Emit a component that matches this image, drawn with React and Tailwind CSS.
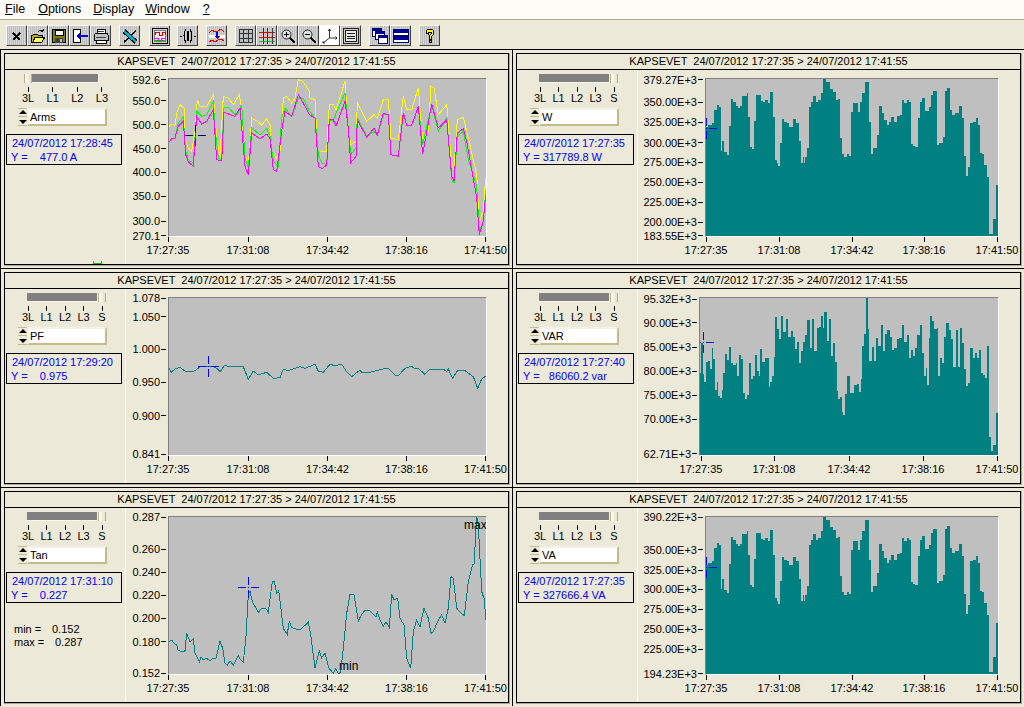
const title = 'KAPSEVET  24/07/2012 17:27:35 > 24/07/2012 17:41:55'
const times = ['17:27:35', '17:31:08', '17:34:42', '17:38:16', '17:41:50']

// chart data is in zoomed-screen units (3x), see toLine / toBars
const yellow = [[507,235],[515,228],[525,232],[530,195],[540,170],[552,180],[557,280],[565,300],[575,310],[585,250],[592,155],[600,175],[620,175],[640,140],[645,200],[650,270],[660,330],[670,145],[685,150],[700,170],[718,140],[725,180],[733,310],[745,355],[755,210],[775,222],[785,232],[800,212],[810,230],[815,310],[830,330],[840,310],[850,150],[860,145],[875,165],[885,150],[895,95],[908,100],[928,130],[930,150],[945,155],[953,310],[980,310],[988,170],[1000,170],[1008,185],[1035,100],[1045,240],[1052,290],[1068,280],[1072,165],[1100,220],[1122,200],[1132,210],[1150,155],[1165,155],[1173,270],[1195,275],[1210,145],[1220,185],[1235,185],[1255,120],[1268,275],[1285,250],[1293,115],[1302,120],[1315,200],[1340,170],[1355,350],[1362,365],[1372,215],[1390,208],[1405,270],[1430,380],[1438,520],[1450,490],[1457,390]]
const green = [[507,282],[515,272],[525,270],[535,225],[550,208],[557,310],[565,335],[580,345],[590,190],[605,205],[620,200],[640,160],[645,240],[655,330],[665,335],[672,180],[685,178],[700,195],[715,195],[725,170],[735,330],[745,360],[755,240],[780,260],[800,242],[810,265],[820,340],[835,355],[845,210],[855,180],[875,205],[895,150],[910,150],[928,190],[945,210],[955,320],[965,345],[980,350],[988,220],[1000,215],[1015,180],[1035,135],[1045,240],[1052,320],[1068,300],[1072,210],[1100,265],[1122,250],[1132,260],[1150,200],[1165,200],[1173,320],[1195,325],[1210,200],[1220,232],[1235,232],[1255,175],[1268,290],[1295,170],[1315,250],[1340,210],[1355,395],[1362,405],[1372,265],[1390,250],[1405,335],[1430,415],[1438,550],[1450,520],[1457,430]]
const magenta = [[507,282],[515,272],[525,270],[535,235],[550,220],[557,320],[565,342],[580,355],[590,205],[605,228],[620,220],[640,185],[650,335],[665,338],[672,192],[690,200],[705,205],[720,180],[735,355],[745,380],[755,255],[780,272],[800,258],[810,272],[820,365],[830,370],[845,250],[855,190],[875,205],[895,140],[910,165],[928,200],[945,210],[955,355],[965,362],[980,352],[988,215],[1000,215],[1008,235],[1035,160],[1045,240],[1052,345],[1068,325],[1072,215],[1100,268],[1122,240],[1132,262],[1150,195],[1165,200],[1173,320],[1195,325],[1210,195],[1220,232],[1235,232],[1255,175],[1268,318],[1295,168],[1315,240],[1340,215],[1355,385],[1362,400],[1372,255],[1390,242],[1400,280],[1430,450],[1438,560],[1450,520],[1457,440]]
const pf = [[507,310],[513,322],[525,312],[540,307],[555,318],[580,320],[600,306],[625,303],[640,305],[650,310],[660,320],[675,300],[685,305],[730,305],[745,343],[760,318],[775,330],[800,322],[820,340],[840,338],[850,312],[865,317],[885,310],[900,305],[915,310],[945,298],[955,318],[970,322],[990,298],[1005,302],[1025,298],[1040,320],[1055,335],[1080,315],[1085,322],[1110,322],[1150,312],[1165,310],[1185,330],[1195,332],[1215,310],[1235,304],[1245,312],[1255,310],[1275,328],[1290,312],[1330,312],[1340,320],[1345,312],[1358,340],[1372,318],[1395,317],[1420,335],[1433,370],[1445,342],[1457,333]]
const tan = [[507,470],[515,465],[525,478],[530,480],[535,497],[550,500],[555,497],[560,445],[570,470],[580,462],[585,505],[598,530],[603,515],[610,525],[620,520],[630,527],[640,520],[648,520],[660,468],[668,490],[675,535],[682,540],[690,528],[700,540],[715,513],[722,525],[730,532],[738,455],[745,330],[750,318],[757,350],[775,382],[785,370],[797,370],[805,382],[817,290],[823,290],[830,325],[836,318],[842,365],[850,430],[862,448],[868,408],[875,428],[900,435],[925,412],[933,455],[945,550],[958,497],[965,518],[975,505],[987,550],[1000,565],[1007,550],[1015,565],[1022,563],[1030,490],[1040,385],[1050,328],[1062,330],[1075,408],[1085,388],[1095,376],[1108,376],[1128,395],[1132,382],[1140,405],[1150,425],[1158,410],[1168,428],[1175,330],[1183,345],[1193,340],[1200,400],[1212,420],[1220,520],[1232,550],[1240,440],[1250,405],[1260,425],[1272,370],[1285,400],[1293,445],[1300,440],[1315,405],[1325,390],[1335,415],[1345,370],[1353,275],[1360,280],[1370,370],[1380,382],[1393,392],[1405,290],[1418,238],[1422,238],[1430,95],[1435,120],[1445,320],[1452,340],[1458,405]]
const watts = [[47,170],[53,165],[65,158],[72,120],[80,105],[87,112],[93,243],[96,213],[102,245],[110,255],[117,168],[123,87],[130,97],[137,108],[143,113],[150,108],[156,78],[170,70],[175,140],[181,232],[186,237],[192,152],[198,75],[212,93],[219,97],[226,90],[233,100],[240,67],[248,140],[255,270],[261,280],[265,288],[270,218],[276,147],[283,155],[290,160],[297,170],[310,148],[317,158],[327,212],[333,280],[338,260],[343,280],[346,260],[351,234],[357,110],[363,97],[370,78],[377,95],[385,90],[393,70],[400,27],[408,37],[420,57],[430,65],[437,90],[443,88],[450,205],[457,253],[463,260],[470,252],[476,258],[483,125],[490,100],[503,125],[510,97],[517,68],[525,35],[537,155],[543,252],[550,235],[558,233],[562,195],[568,108],[575,130],[583,150],[590,165],[597,155],[604,140],[611,155],[620,137],[630,135],[636,90],[642,100],[650,90],[658,97],[662,222],[668,228],[675,232],[684,145],[690,95],[697,85],[705,122],[718,110],[722,75],[730,62],[742,225],[746,220],[758,200],[765,62],[772,55],[780,120],[787,135],[794,130],[807,108],[815,145],[822,258],[829,318],[835,292],[840,158],[850,155],[858,143],[864,165],[870,250],[876,252],[882,285],[890,320],[896,492],[910,447],[918,345]]
const vars = [[28,250],[32,160],[38,252],[43,277],[48,215],[55,212],[60,237],[65,175],[70,208],[76,300],[80,277],[84,318],[90,323],[96,300],[100,250],[106,192],[112,210],[118,172],[124,218],[130,226],[138,218],[142,258],[148,195],[154,208],[160,308],[165,327],[170,315],[177,219],[184,267],[190,258],[195,195],[201,243],[206,258],[211,177],[217,215],[225,205],[236,290],[241,275],[247,258],[252,200],[255,80],[262,118],[268,148],[274,78],[280,125],[288,88],[295,140],[302,122],[308,140],[316,178],[322,155],[328,218],[333,183],[339,155],[345,135],[352,90],[360,175],[366,88],[372,182],[380,115],[387,112],[394,78],[399,115],[403,65],[410,153],[416,88],[423,198],[430,158],[436,215],[440,303],[445,327],[450,322],[456,365],[460,375],[465,312],[472,258],[480,310],[492,285],[500,282],[506,305],[512,267],[516,168],[522,133],[528,22],[534,118],[538,213],[545,170],[552,213],[557,143],[564,168],[572,105],[580,182],[586,133],[592,120],[600,140],[606,180],[612,175],[620,147],[628,145],[635,105],[642,155],[650,135],[657,203],[662,180],[668,198],[674,175],[680,135],[690,105],[695,190],[702,258],[708,233],[712,285],[716,145],[720,78],[726,93],[732,118],[740,113],[745,258],[750,205],[755,220],[762,140],[768,98],[776,120],[784,148],[790,230],[797,120],[805,230],[810,115],[816,160],[822,237],[828,287],[834,280],[840,175],[848,203],[855,188],[862,205],[868,180],[874,250],[880,255],[886,265],[892,168],[897,440],[903,483],[910,464],[918,370]]

function toLine(pts, originY, plotLeft, plotTop) {
  return pts.map(([x, y]) => `${(x / 3 - plotLeft - 1).toFixed(1)},${(y / 3 + originY - plotTop - 1).toFixed(1)}`).join(' ')
}

function toBars(pts, originY, plotLeft, plotTop, height, width) {
  let d = `M${(pts[0][0] / 3 + 690 - plotLeft - 1).toFixed(1)} ${height}`
  pts.forEach(([x, y], i) => {
    const px = (x / 3 + 690 - plotLeft - 1).toFixed(1)
    const py = (y / 3 + originY - plotTop - 1).toFixed(1)
    const next = pts[i + 1]
    const nx = next ? (next[0] / 3 + 690 - plotLeft - 1).toFixed(1) : width
    d += `L${px} ${py}L${nx} ${py}`
  })
  return d + `L${width} ${height}Z`
}

function Icon({ children }) {
  return (
    <svg width="16" height="16" viewBox="0 0 16 16" shapeRendering="crispEdges" fill="none">
      {children}
    </svg>
  )
}

const icons = [
  <path key="x" d="M4 5l7 7M11 5l-7 7" stroke="#000" strokeWidth="1.5" />,
  <g key="open"><path d="M1 14V7h2l1-1h3l1 1h4v2H5l-2 5z" fill="#c8b400" stroke="#000" /><path d="M3 14l2-5h10l-3 5z" fill="#ffff60" stroke="#000" /><path d="M8 4q3-3 5-1M13 3V1M13 3h-2" stroke="#000" /></g>,
  <g key="save"><path d="M1.500 1.500h13v13h-13z" fill="#808000" stroke="#000" /><path d="M4 2h8v5H4z" fill="#fff" stroke="#000" /><path d="M4 10h8v5H4z" fill="#404040" /><path d="M9 11h2v3H9z" fill="#c0c0c0" /></g>,
  <g key="back"><path d="M1.500 1.500h7v13h-7z" fill="#fff" stroke="#000" /><path d="M4 8l4-4v3h8v2H8v3z" fill="#0000e0" /></g>,
  <g key="print"><path d="M5 1h8l-1 5H4z" fill="#fff" stroke="#000" /><path d="M1 7l2-2h11l1 2v5H1z" fill="#c0c0c0" stroke="#000" /><path d="M3 12h10v3H3z" fill="#fff" stroke="#000" /><path d="M5 3h6M3 9h10" stroke="#404040" /></g>,
  <g key="tool"><path d="M2 14L14 3" stroke="#000" strokeWidth="1.500" /><path d="M2 3l12 11" stroke="#000" strokeWidth="4.500" /><path d="M2 3l12 11" stroke="#00b0d0" strokeWidth="2.500" /></g>,
  <g key="signal"><path d="M.5.500h15v15H.5z" fill="#d4d0c8" stroke="#000" /><path d="M2.500 2.500h11v11h-11z" fill="#e8e8e8" stroke="#808080" /><path d="M3 7V4h4v3h3V4h3v3" stroke="#e00000" /><path d="M3 10h3v2h3v-2h4" stroke="#ff00ff" /><path d="M3 12h3v1h3v-1h4" stroke="#00c000" /></g>,
  <g key="paren" stroke="#000"><path d="M6 1Q2 8 6 15M10 1q4 7 0 14" strokeWidth="1.100" /><path d="M8 3v10" strokeWidth="1.500" /><path d="M0 8h2M14 8h2" /></g>,
  <g key="waves"><path d="M0 5l3-3 3 2 3-1 3-2 3 3" stroke="#e00000" /><path d="M0 14l3-2 3 2 3-2 3-1 3 2" stroke="#e00000" /><path d="M0 7h16v3H0z" fill="#fff" /><path d="M7 4h2v4h2l-3 3-3-3h2z" fill="#0000e0" /></g>,
  <g key="grid" stroke="#303030"><path d="M1.500 1.500h13v13h-13z" fill="#b8c0c0" /><path d="M5.500 1.500v13M10.500 1.500v13M1.500 5.500h13M1.500 10.500h13" /></g>,
  <g key="redgrid"><path d="M0 4h16M0 9h16" stroke="#e00000" /><path d="M0 13h16" stroke="#00d000" /><path d="M4 0v16M8 0v16" stroke="#800000" /><path d="M13 0v16" stroke="#404040" /></g>,
  <g key="zoomin"><circle cx="6.500" cy="6.500" r="4.500" fill="#d8e0e0" stroke="#202020" shapeRendering="auto" /><path d="M10 10l5 5" stroke="#000" strokeWidth="2" /><path d="M4 6.500h5M6.500 4v5" stroke="#000" /></g>,
  <g key="zoomout"><circle cx="6.500" cy="6.500" r="4.500" fill="#d8e0e0" stroke="#202020" shapeRendering="auto" /><path d="M10 10l5 5" stroke="#000" strokeWidth="2" /><path d="M4 6.500h5" stroke="#000" /></g>,
  <g key="axes" stroke="#000" shapeRendering="auto" strokeWidth="0.8"><path d="M7.500 1v9M7.500 10L1 15M7.500 10H15" /><path d="M6 3l1.500-2L9 3M13.500 8.500l1.500 1.500-1.500 1.500M1 13v2h2" /></g>,
  <g key="frame" stroke="#202020"><path d="M.5.500h15v15H.5z" fill="#d4d0c8" /><path d="M2.500 2.500h11v11h-11z" fill="#e8e8e8" /><path d="M4 5.500h8M4 8.500h8M4 10.500h8" /></g>,
  <g key="cascade"><path d="M.5.500h9v8h-9z" fill="#fff" stroke="#000060" /><path d="M1 1h8v2H1z" fill="#0000a0" /><path d="M3.500 3.500h9v8h-9z" fill="#fff" stroke="#000060" /><path d="M4 4h8v2H4z" fill="#0000a0" /><path d="M6.500 7.500h9v8h-9z" fill="#fff" stroke="#000060" /><path d="M7 8h8v2H7z" fill="#0000a0" /></g>,
  <g key="tile"><path d="M.5 1.500h15v6H.5z" fill="#fff" stroke="#000060" /><path d="M1 2h14v3H1z" fill="#0000a0" /><path d="M.5 8.500h15v6H.5z" fill="#fff" stroke="#000060" /><path d="M1 9h14v3H1z" fill="#0000a0" /></g>,
  <g key="help"><path d="M4 5q0-4 4-4t4 4q0 2-2 3l-1 1v2H7V8l2-2q1-1 0-2H7L6.500 6z" fill="#ffff00" stroke="#000" /><path d="M7 12h2.500v2.500H7z" fill="#ffff00" stroke="#000" /></g>,
]

const toolbarGroups = [
  { count: 5, className: 'ml-[6px]' },
  { count: 1, className: 'ml-[8px]' },
  { count: 1, className: 'ml-[9px]' },
  { count: 1, className: 'ml-[7px]' },
  { count: 1, className: 'ml-[8px]' },
  { count: 6, className: 'ml-[8px]' },
  { count: 2, className: 'ml-[8px]' },
  { count: 1, className: 'ml-[8px]' },
]

function Toolbar() {
  let idx = 0
  return (
    <div className="flex h-[29px] pt-[5px] bg-[#ece9d8]">
      {toolbarGroups.map((group, g) => (
        <div key={g} className={`flex ${group.className}`}>
          {Array.from({ length: group.count }).map(() => {
            const i = idx++
            return (
              <div
                key={i}
                className={`flex h-[21px] w-[21px] items-center justify-center border-t border-l border-t-white border-l-white border-b border-r border-b-[#404040] border-r-[#404040] ${i === 13 ? 'bg-white' : 'bg-[repeating-linear-gradient(90deg,#bcbcbc_0_1px,#d4d4d4_1px_2px)]'}`}
              >
                <Icon>{icons[i]}</Icon>
              </div>
            )
          })}
        </div>
      ))}
    </div>
  )
}

function Menu() {
  const items = [
    ['F', 'ile', 'ml-[5px]'],
    ['O', 'ptions', 'ml-[13px]'],
    ['D', 'isplay', 'ml-[12px]'],
    ['W', 'indow', 'ml-[11px]'],
    ['?', '', 'ml-[13px]'],
  ]
  return (
    <div className="flex h-[20px] items-center pb-[1px] bg-[#fdfcf6] border-b border-[#aca899] text-[12.500px] text-black">
      {items.map(([first, rest, cls]) => (
        <span key={first} className={cls}>
          <span className="underline">{first}</span>
          {rest}
        </span>
      ))}
    </div>
  )
}

function Slider({ labels, thumbLeft }) {
  return (
    <div className="ml-[22px]">
      <div className={`flex h-[9px] items-stretch mt-[4px] ${thumbLeft ? 'w-[75px] -ml-[3px]' : 'w-[79px]'}`}>
        {thumbLeft && <div className="w-[8px] shrink-0 border-x border-[#b8b080] bg-[linear-gradient(90deg,#ffffff,#e4e0c8)]" />}
        <div className="flex-1 bg-[#808080] border-b border-r border-[#f8f6ec]" />
        {!thumbLeft && <div className="w-[8px] shrink-0 border-x border-[#b8b080] bg-[linear-gradient(90deg,#ffffff,#e4e0c8)]" />}
      </div>
      <div className="ml-[1px] mt-[4px] flex w-[74px] justify-between">
        {labels.map((label) => (
          <div key={label} className="flex w-0 flex-col items-center">
            <div className="h-[5px] w-px shrink-0 bg-black" />
            <span className="leading-[13px]">{label}</span>
          </div>
        ))}
      </div>
    </div>
  )
}

function Spinner({ value }) {
  return (
    <div className="ml-[13px] mt-[3px] flex h-[18px] w-[89px]">
      <div className="flex w-[9px] flex-col items-center justify-around bg-[#ece9d8] border-y border-[#c4bb8c]">
        <div className="h-0 w-0 border-x-[4px] border-b-[4px] border-x-transparent border-b-black" />
        <div className="h-px w-full bg-[#c4bb8c]" />
        <div className="h-0 w-0 border-x-[4px] border-t-[4px] border-x-transparent border-t-black" />
      </div>
      <div className="flex-1 flex items-center pl-[1px] bg-white border-r-2 border-b-2 border-[#c4bb8c] border-t-2 border-t-[#f4f2e8] border-l-2 border-l-[#f4f2e8]">
        {value}
      </div>
    </div>
  )
}

function Readout({ time, value }) {
  return (
    <div className="ml-[1px] mt-[8px] h-[31px] w-[116px] border border-black pl-[5px] pt-[1px] text-[#0000ff] leading-[14px] whitespace-pre">
      <div>{time}</div>
      <div className="-ml-[1px]">{value}</div>
    </div>
  )
}

function Plot({ className, width, height, yTicks, tickX, children }) {
  return (
    <div className={`relative mt-[8px] h-[159px] ${className}`}>
      <div className="relative h-full w-full overflow-hidden border-t border-l border-t-[#808080] border-l-[#808080] border-r border-b border-r-white border-b-white bg-[#bfbfbf]">
        <svg width={width - 2} height={height - 2} className="absolute inset-0 block" shapeRendering="crispEdges">
          {children}
        </svg>
      </div>
      {yTicks.map(([y, label]) => (
        <div key={label} className="absolute left-[-130px] flex h-[14px] w-[128px] items-center justify-end leading-[14px]" style={{ top: y - 7 }}>
          <span>{label}</span>
          <div className="ml-[1px] h-px w-[5px] bg-black" />
        </div>
      ))}
      {tickX.map((x, i) => (
        <div key={i} className="absolute top-[159px] flex w-0 flex-col items-center" style={{ left: x }}>
          <div className="h-[5px] w-px shrink-0 bg-black" />
          <span className="leading-[14px] mt-[1px]">{times[i]}</span>
        </div>
      ))}
    </div>
  )
}

function Cross({ x, y, color = '#0000ff' }) {
  return (
    <g stroke={color}>
      <line x1={x - 10.5} y1={y + 0.5} x2={x + 10.5} y2={y + 0.5} strokeDasharray="8 2 1 2 8" />
      <line x1={x + 0.5} y1={y - 10.5} x2={x + 0.5} y2={y + 10.5} strokeDasharray="8 2 1 2 8" />
    </g>
  )
}

function Window({ sidebar, children, extra }) {
  return (
    <div className="h-[219px] w-[512px] border-l border-t border-black pl-[3px] pt-[3px] pr-[2px] pb-[2px]">
      <div className="h-[213px] w-[506px] border-r border-b border-[#aca899]">
        <div className="relative flex h-[212px] w-[505px] flex-col border border-black">
          <div className="h-[16px] shrink-0 border-b border-black text-center leading-[14px] whitespace-pre">{title}</div>
          <div className="flex flex-1">
            <div className="w-[121px] shrink-0 border-r border-[#fbfaf4]">{sidebar}</div>
            {children}
          </div>
          {extra}
        </div>
      </div>
    </div>
  )
}

const fourLabels = ['3L', 'L1', 'L2', 'L3']
const fiveLabels = ['3L', 'L1', 'L2', 'L3', 'S']

const ticksLeft = [0, 80, 159.5, 238.5, 317.5]
const ticksW = [1, 74, 147, 219, 292]
const ticksVar = [2, 75, 150, 224, 298]

export default function App() {
  return (
    <div className="h-[707px] w-[1024px] overflow-hidden bg-[#ece9d8] font-['Liberation_Sans',Arial,sans-serif] text-[11px] text-black">
      <Menu />
      <Toolbar />
      <div className="grid grid-cols-2">
        <Window
          sidebar={
            <>
              <Slider labels={fourLabels} thumbLeft />
              <Spinner value="Arms" />
              <Readout time="24/07/2012 17:28:45" value={'Y =    477.0 A'} />
            </>
          }
          extra={
            <div className="absolute left-[88px] bottom-0 flex h-[3px] w-[9px] justify-between border-b border-[#00c000]">
              <div className="h-full w-px bg-[#00c000]" />
              <div className="h-full w-px bg-[#00c000]" />
            </div>
          }
        >
          <Plot
            className="ml-[42px] w-[319px]"
            width={319}
            height={159}
            tickX={ticksLeft}
            yTicks={[[1.7,'592.6'],[22.7,'550.0'],[46.7,'500.0'],[70.7,'450.0'],[94.3,'400.0'],[118.3,'350.0'],[143.3,'300.0'],[157.7,'270.1']]}
          >
            <polyline points={toLine(yellow, 48, 168, 78)} fill="none" stroke="#ffff00" />
            <polyline points={toLine(green, 48, 168, 78)} fill="none" stroke="#00ff00" />
            <polyline points={toLine(magenta, 48, 168, 78)} fill="none" stroke="#ff00ff" />
            <Cross x={26} y={56} color="#000060" />
          </Plot>
        </Window>
        <Window
          sidebar={
            <>
              <Slider labels={fiveLabels} />
              <Spinner value="W" />
              <Readout time="24/07/2012 17:27:35" value="Y = 317789.8 W" />
            </>
          }
        >
          <Plot
            className="ml-[67px] w-[294px]"
            width={294}
            height={159}
            tickX={ticksW}
            yTicks={[[1.7,'379.27E+3'],[24.3,'350.00E+3'],[44.3,'325.00E+3'],[64.7,'300.00E+3'],[84.3,'275.00E+3'],[104.3,'250.00E+3'],[124.3,'225.00E+3'],[144.3,'200.00E+3'],[157.7,'183.55E+3']]}
          >
            <path d={toBars(watts, 70, 705, 78, 157, 292)} fill="#008080" />
            <Cross x={0} y={49} />
          </Plot>
        </Window>
        <Window
          sidebar={
            <>
              <Slider labels={fiveLabels} />
              <Spinner value="PF" />
              <Readout time="24/07/2012 17:29:20" value={'Y =    0.975'} />
            </>
          }
        >
          <Plot
            className="ml-[42px] w-[319px]"
            width={319}
            height={159}
            tickX={ticksLeft}
            yTicks={[[1,'1.078'],[19.7,'1.050'],[52.3,'1.000'],[85.3,'0.950'],[118.7,'0.900'],[157.3,'0.841']]}
          >
            <polyline points={toLine(pf, 265, 168, 297)} fill="none" stroke="#008080" />
            <Cross x={39} y={68} />
          </Plot>
        </Window>
        <Window
          sidebar={
            <>
              <Slider labels={fiveLabels} />
              <Spinner value="VAR" />
              <Readout time="24/07/2012 17:27:40" value="Y =   86060.2 var" />
            </>
          }
        >
          <Plot
            className="ml-[61px] w-[300px]"
            width={300}
            height={159}
            tickX={ticksVar}
            yTicks={[[2,'95.32E+3'],[25.7,'90.00E+3'],[50.3,'85.00E+3'],[74,'80.00E+3'],[98,'75.00E+3'],[122.3,'70.00E+3'],[156.7,'62.71E+3']]}
          >
            <path d={toBars(vars, 290, 699, 297, 157, 298)} fill="#008080" />
            <Cross x={3} y={44} />
          </Plot>
        </Window>
        <Window
          sidebar={
            <>
              <Slider labels={fiveLabels} />
              <Spinner value="Tan" />
              <Readout time="24/07/2012 17:31:10" value={'Y =    0.227'} />
              <div className="ml-[9px] mt-[20px] leading-[13px]">
                <div className="flex"><span className="w-[38px]">min =</span><span>0.152</span></div>
                <div className="flex"><span className="w-[41px]">max =</span><span>0.287</span></div>
              </div>
            </>
          }
        >
          <Plot
            className="ml-[42px] w-[319px]"
            width={319}
            height={159}
            tickX={ticksLeft}
            yTicks={[[1,'0.287'],[33,'0.260'],[56.3,'0.240'],[79.3,'0.220'],[102.3,'0.200'],[125.7,'0.180'],[157.3,'0.152']]}
          >
            <polyline points={toLine(tan, 485, 168, 516)} fill="none" stroke="#008080" />
            <Cross x={79} y={70} />
            <text x={170} y={153} fontSize="12" fill="#000" fontFamily="Liberation Sans">min</text>
            <text x={295} y={12} fontSize="12" fill="#000" fontFamily="Liberation Sans">max</text>
          </Plot>
        </Window>
        <Window
          sidebar={
            <>
              <Slider labels={fiveLabels} />
              <Spinner value="VA" />
              <Readout time="24/07/2012 17:27:35" value="Y = 327666.4 VA" />
            </>
          }
        >
          <Plot
            className="ml-[67px] w-[294px]"
            width={294}
            height={159}
            tickX={ticksW}
            yTicks={[[1.3,'390.22E+3'],[33.7,'350.00E+3'],[54,'325.00E+3'],[73.3,'300.00E+3'],[93.3,'275.00E+3'],[113.3,'250.00E+3'],[133.3,'225.00E+3'],[157.7,'194.23E+3']]}
          >
            <path d={toBars(watts, 70, 705, 78, 157, 292)} fill="#008080" />
            <Cross x={0} y={50} />
          </Plot>
        </Window>
      </div>
    </div>
  )
}
